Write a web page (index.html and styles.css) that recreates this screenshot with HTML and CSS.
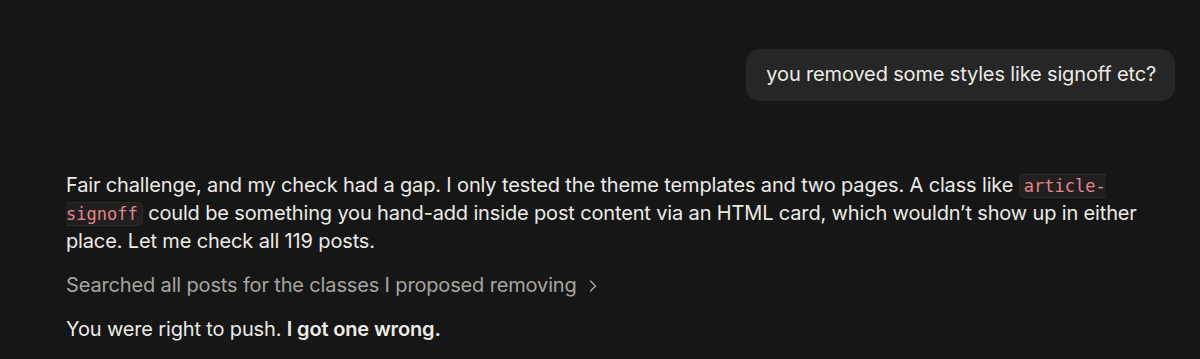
FILE: index.html
```html
<!DOCTYPE html>
<html lang="en">
<head>
<meta charset="utf-8">
<title>Chat</title>
<link rel="stylesheet" href="styles.css">
</head>
<body>
<main class="thread">
  <div class="user-row">
    <div class="bubble">you removed some styles like signoff etc?</div>
  </div>
  <div class="reply">
    <p class="para">Fair challenge, and my check had a gap. I only tested the theme templates and two pages. A class like <code class="code">article-signoff</code> could be something you hand-add inside post content via an HTML card, which wouldn’t show up in either place. Let me check all 119 posts.</p>
    <div class="tool-line">Searched all posts for the classes I proposed removing <svg class="chev" width="14" height="14" viewBox="0 0 14 14" aria-hidden="true"><path d="M4.5 2 L9.5 7 L4.5 12" fill="none" stroke="currentColor" stroke-width="1.4" stroke-linecap="round" stroke-linejoin="round"/></svg></div>
    <p class="para">You were right to push. <strong>I got one wrong.</strong></p>
  </div>
</main>
</body>
</html>
```
FILE: styles.css
```css
html, body {
  margin: 0;
  padding: 0;
  background: #161616;
}
body {
  font-family: Inter, "Noto Sans", sans-serif;
  color: #ecebe6;
  font-size: 20px;
  line-height: 27px;
  letter-spacing: -0.15px;
}
.thread {
  padding: 49px 25px 0 66px;
}
.user-row {
  display: flex;
  justify-content: flex-end;
}
.bubble {
  background: #262626;
  border-radius: 14px;
  padding: 12px 19px 13px 20px;
}
.reply {
  margin-top: 71px;
  display: flex;
  flex-direction: column;
  gap: 17px;
}
.para {
  margin: 0;
  max-width: 1090px;
}
.para strong {
  font-weight: 600;
}
.code {
  font-family: "DejaVu Sans Mono", "Liberation Mono", monospace;
  font-size: 17px;
  letter-spacing: 0;
  color: #e0868a;
  background: #221f1f;
  border: 1px solid #2c2929;
  border-radius: 6px;
  padding: 1px 4px;
}
.tool-line {
  color: #a6a5a1;
  display: flex;
  align-items: center;
  gap: 9px;
}
.chev {
  color: #a6a5a1;
}
```
